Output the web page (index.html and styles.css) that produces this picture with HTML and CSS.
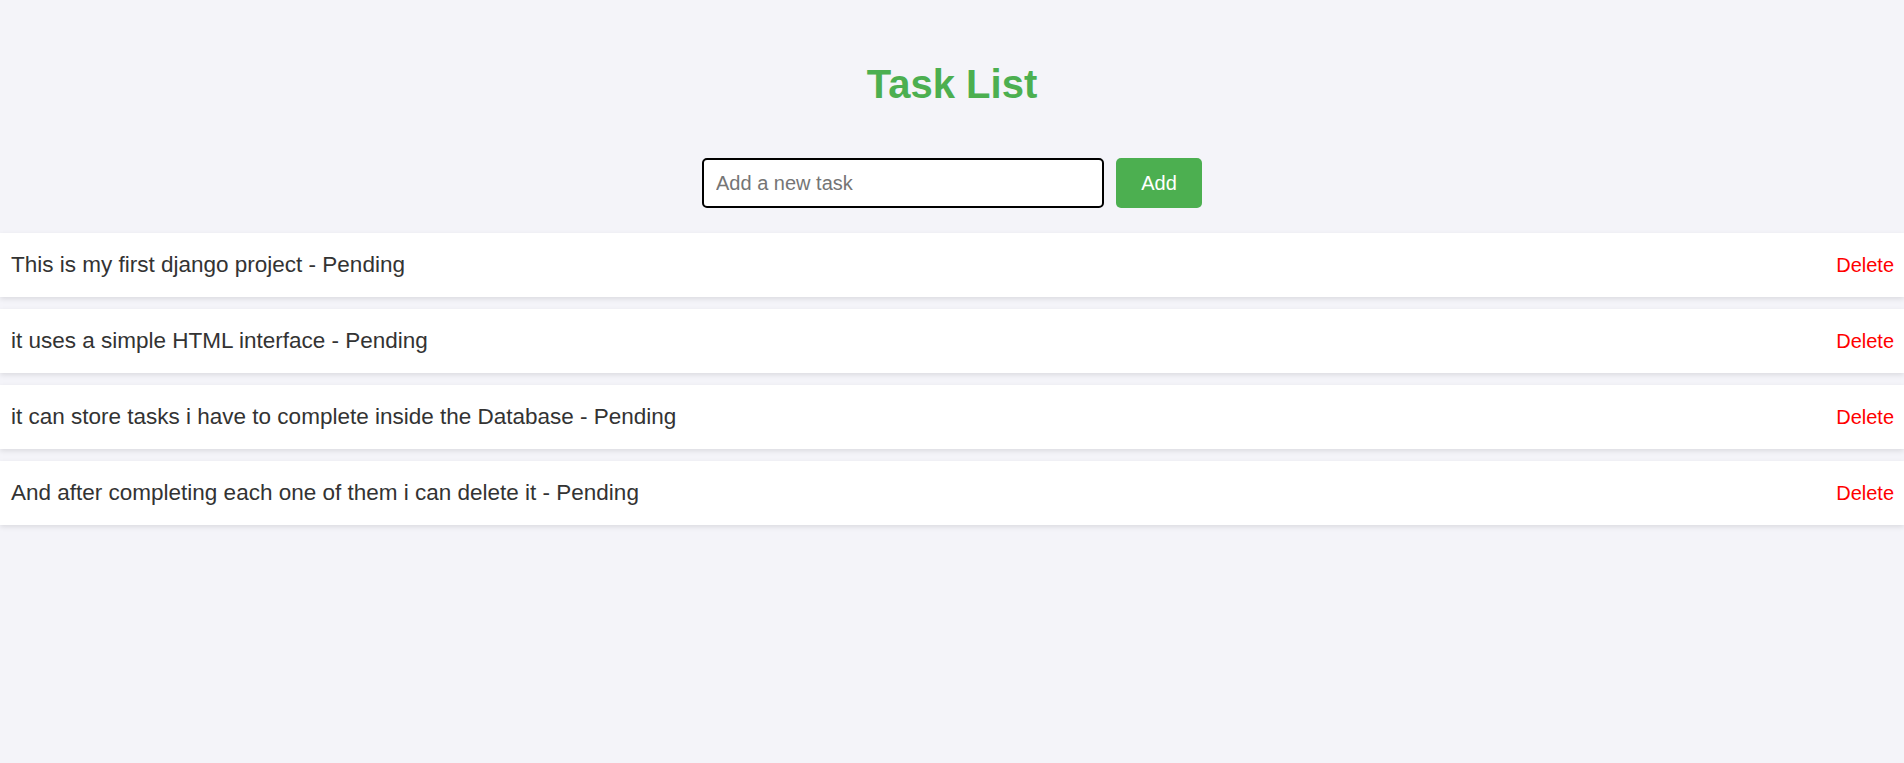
FILE: index.html
```html
<!DOCTYPE html>
<html lang="en">
<head>
<meta charset="utf-8">
<title>Task List</title>
<link rel="stylesheet" href="styles.css">
</head>
<body>
  <h1 class="title">Task List</h1>
  <form class="task-form">
    <input class="task-input" type="text" placeholder="Add a new task">
    <button class="add-btn" type="button">Add</button>
  </form>
  <ul class="task-list">
    <li class="task-item"><span class="task-text">This is my first django project - Pending</span><a class="delete-link" href="#">Delete</a></li>
    <li class="task-item"><span class="task-text">it uses a simple HTML interface - Pending</span><a class="delete-link" href="#">Delete</a></li>
    <li class="task-item"><span class="task-text">it can store tasks i have to complete inside the Database - Pending</span><a class="delete-link" href="#">Delete</a></li>
    <li class="task-item"><span class="task-text">And after completing each one of them i can delete it - Pending</span><a class="delete-link" href="#">Delete</a></li>
  </ul>
</body>
</html>
```
FILE: styles.css
```css
* { box-sizing: border-box; }
html, body {
  margin: 0;
  padding: 0;
  background: #f4f4f9;
  font-family: "Liberation Sans", Arial, sans-serif;
  color: #333;
}
.title {
  margin: 61px 0 0;
  text-align: center;
  color: #4caf50;
  font-size: 40px;
  font-weight: bold;
  line-height: 46px;
}
.task-form {
  display: flex;
  justify-content: center;
  gap: 12px;
  margin: 51px 0 25px;
}
.task-input {
  width: 402px;
  height: 50px;
  padding: 0 12px;
  border: 2px solid #000;
  border-radius: 5px;
  background: #fff;
  font-family: "Liberation Sans", Arial, sans-serif;
  font-size: 20px;
  color: #333;
  outline: none;
}
.task-input::placeholder { color: #757575; }
.add-btn {
  width: 86px;
  height: 50px;
  padding: 0;
  border: none;
  border-radius: 5px;
  background: #4caf50;
  color: #fff;
  font-family: "Liberation Sans", Arial, sans-serif;
  font-size: 20px;
  cursor: pointer;
}
.task-list {
  list-style: none;
  margin: 0;
  padding: 0;
}
.task-item {
  display: flex;
  justify-content: space-between;
  align-items: center;
  height: 64px;
  margin-bottom: 12px;
  padding: 0 10px 0 11px;
  background: #fff;
  box-shadow: 0 2px 5px rgba(0, 0, 0, 0.1);
}
.task-text {
  font-size: 22.5px;
  color: #333;
}
.delete-link {
  font-size: 20px;
  color: #ff0000;
  text-decoration: none;
}
```
